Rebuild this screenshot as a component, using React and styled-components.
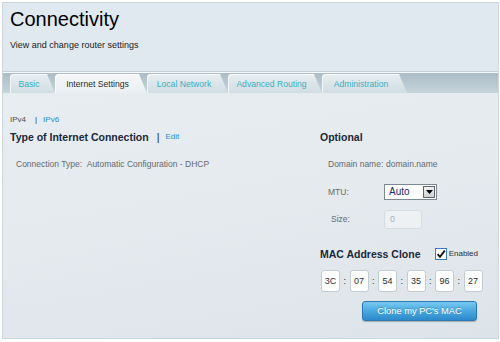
import React from 'react';
import styled, { createGlobalStyle } from 'styled-components';

const GlobalStyle = createGlobalStyle`
  html, body {
    margin: 0;
    padding: 0;
    background: #ffffff;
  }
  body {
    font-family: "Liberation Sans", Arial, sans-serif;
  }
`;

const Frame = styled.div`
  margin: 2px 1px 0 2px;
  height: 337px;
  box-sizing: border-box;
  border: 1px solid #cbd5db;
  display: flex;
  flex-direction: column;
  background: linear-gradient(170deg, #e8eef1 0%, #e4eaee 60%, #dde4e9 100%);
  overflow: hidden;
`;

const Header = styled.div`
  height: 69px;
  box-sizing: border-box;
  padding: 4px 7px 0;
  background: #e0e9ef;
  border-bottom: 1px solid #c4cfd6;
`;

const Title = styled.div`
  font-size: 20px;
  line-height: 24px;
  color: #000;
`;

const Subtitle = styled.div`
  margin-top: 8px;
  font-size: 9px;
  line-height: 12px;
  color: #222;
`;

const TabBar = styled.div`
  display: flex;
  align-items: flex-end;
  height: 20px;
  padding: 0 7px;
  border-top: 1px solid #f6f9fa;
  background: linear-gradient(#abbdc7, #c6d4db);
`;

const Tab = styled.div`
  width: ${({ $w }) => $w}px;
  height: 19px;
  box-sizing: border-box;
  padding-right: 7px;
  display: flex;
  align-items: center;
  justify-content: center;
  font-size: 8.6px;
  color: ${({ $active }) => ($active ? '#2b2b2b' : '#38afc2')};
  background: ${({ $active }) =>
    $active
      ? 'linear-gradient(#f4f7f8, #e9eff2)'
      : 'linear-gradient(#e7eef1, #d0dde2)'};
  border-top-left-radius: 4px;
  box-shadow: inset 1px 1px 0 rgba(255, 255, 255, 0.7);
  clip-path: polygon(0 0, calc(100% - 8px) 0, 100% 100%, 0 100%);
`;

const Content = styled.div`
  flex: 1;
  padding: 21px 7px 0;
`;

const IpRow = styled.div`
  font-size: 8px;
  line-height: 12px;
  color: #4c4c58;
`;

const Sep = styled.span`
  margin: 0 6px 0 9px;
  color: #333;
`;

const BlueLink = styled.span`
  color: #2d8ad2;
  font-size: 8px;
  font-weight: normal;
`;

const Columns = styled.div`
  margin-top: 4px;
  display: grid;
  grid-template-columns: 310px 1fr;
`;

const Column = styled.div`
  display: flex;
  flex-direction: column;
`;

const Heading = styled.div`
  display: flex;
  align-items: center;
  font-size: 10.5px;
  line-height: 14px;
  font-weight: bold;
  color: #1b283a;
  margin-top: ${({ $mt }) => $mt || 0}px;
`;

const HeadSep = styled.span`
  font-weight: normal;
  margin: 0 6px 0 8px;
`;

const Row = styled.div`
  height: 27.8px;
  display: flex;
  align-items: center;
  padding-left: ${({ $indent }) => $indent}px;
  font-size: 8.5px;
  color: #66696d;
`;

const FirstRow = styled(Row)`
  margin-top: 6px;
`;

const Label = styled.span`
  width: ${({ $w }) => $w}px;
  padding-left: ${({ $pl }) => $pl || 0}px;
  box-sizing: border-box;
`;

const Select = styled.div`
  width: 53px;
  height: 16px;
  box-sizing: border-box;
  border: 1px solid #7c8894;
  background: #fff;
  display: flex;
  align-items: center;
  justify-content: space-between;
  padding: 0 1px 0 4px;
  font-size: 10px;
  color: #1c2a6e;
`;

const SelectBtn = styled.div`
  width: 12px;
  height: 12px;
  box-sizing: border-box;
  border: 1px solid #5d6670;
  background: linear-gradient(#f2f2f2, #cfd3d6);
  display: flex;
  align-items: center;
  justify-content: center;
`;

const SizeInput = styled.div`
  width: 38px;
  height: 19px;
  box-sizing: border-box;
  border: 1px solid #d5dde2;
  border-radius: 3px;
  background: #edf1f3;
  padding-left: 5px;
  display: flex;
  align-items: center;
  font-size: 9px;
  color: #a9b2ba;
`;

const Check = styled.label`
  margin-left: auto;
  margin-right: 13px;
  display: flex;
  align-items: center;
  gap: 2px;
  font-size: 8px;
  font-weight: normal;
  color: #2a2e35;
`;

const MacRow = styled.div`
  margin-top: 9px;
  display: flex;
  align-items: center;
  padding-left: 1px;
`;

const MacBox = styled.div`
  width: 19px;
  height: 22px;
  box-sizing: border-box;
  border: 1px solid #c3ccd2;
  border-radius: 3px;
  background: #fff;
  display: flex;
  align-items: center;
  justify-content: center;
  font-size: 9px;
  color: #2a2e35;
`;

const Colon = styled.span`
  width: 9.5px;
  text-align: center;
  font-size: 9px;
  color: #2a2e35;
`;

const CloneButton = styled.button`
  margin: 9px 0 0 42px;
  width: 115px;
  height: 20px;
  box-sizing: border-box;
  border: 1px solid #2b78b3;
  border-radius: 3px;
  background: linear-gradient(#78c9f0, #49a7e0 50%, #2d8acb);
  box-shadow: 0 1px 1px rgba(0, 0, 0, 0.25);
  color: #fff;
  font-family: "Liberation Sans", Arial, sans-serif;
  font-size: 9.3px;
  text-shadow: 0 -1px 0 rgba(0, 0, 0, 0.2);
  padding: 0;
`;

const tabs = [
  { name: 'Basic', w: 45 },
  { name: 'Internet Settings', w: 92, active: true },
  { name: 'Local Network', w: 81 },
  { name: 'Advanced Routing', w: 94 },
  { name: 'Administration', w: 85 },
];

const mac = ['3C', '07', '54', '35', '96', '27'];

const App = () => {
  return (
    <>
      <GlobalStyle />
      <Frame>
        <Header>
          <Title>Connectivity</Title>
          <Subtitle>View and change router settings</Subtitle>
        </Header>
        <TabBar>
          {tabs.map((t) => (
            <Tab key={t.name} $w={t.w} $active={t.active}>
              {t.name}
            </Tab>
          ))}
        </TabBar>
        <Content>
          <IpRow>
            IPv4<Sep>|</Sep>
            <BlueLink>IPv6</BlueLink>
          </IpRow>
          <Columns>
            <Column>
              <Heading>
                Type of Internet Connection<HeadSep>|</HeadSep>
                <BlueLink>Edit</BlueLink>
              </Heading>
              <FirstRow $indent={6}>
                <Label>Connection Type:</Label>
                &nbsp;&nbsp;Automatic Configuration - DHCP
              </FirstRow>
            </Column>
            <Column>
              <Heading>Optional</Heading>
              <FirstRow $indent={8}>
                <Label $w={58}>Domain name:</Label>
                domain.name
              </FirstRow>
              <Row $indent={8}>
                <Label $w={56}>MTU:</Label>
                <Select>
                  Auto
                  <SelectBtn>
                    <svg width="7" height="4" viewBox="0 0 7 4">
                      <path d="M0 0 H7 L3.5 4 Z" fill="#000" />
                    </svg>
                  </SelectBtn>
                </Select>
              </Row>
              <Row $indent={8}>
                <Label $w={56} $pl={3}>Size:</Label>
                <SizeInput>0</SizeInput>
              </Row>
              <Heading $mt={14}>
                MAC Address Clone
                <Check>
                  <svg width="12" height="12" viewBox="0 0 12 12">
                    <rect x="0.5" y="0.5" width="11" height="11" fill="#fff" stroke="#3a7bc6" />
                    <path d="M2.6 6.2 L5 8.8 L9.8 2.6" fill="none" stroke="#111" strokeWidth="1.8" />
                  </svg>
                  Enabled
                </Check>
              </Heading>
              <MacRow>
                {mac.map((m, i) => (
                  <React.Fragment key={i}>
                    {i > 0 && <Colon>:</Colon>}
                    <MacBox>{m}</MacBox>
                  </React.Fragment>
                ))}
              </MacRow>
              <CloneButton>Clone my PC's MAC</CloneButton>
            </Column>
          </Columns>
        </Content>
      </Frame>
    </>
  );
};

export default App;
